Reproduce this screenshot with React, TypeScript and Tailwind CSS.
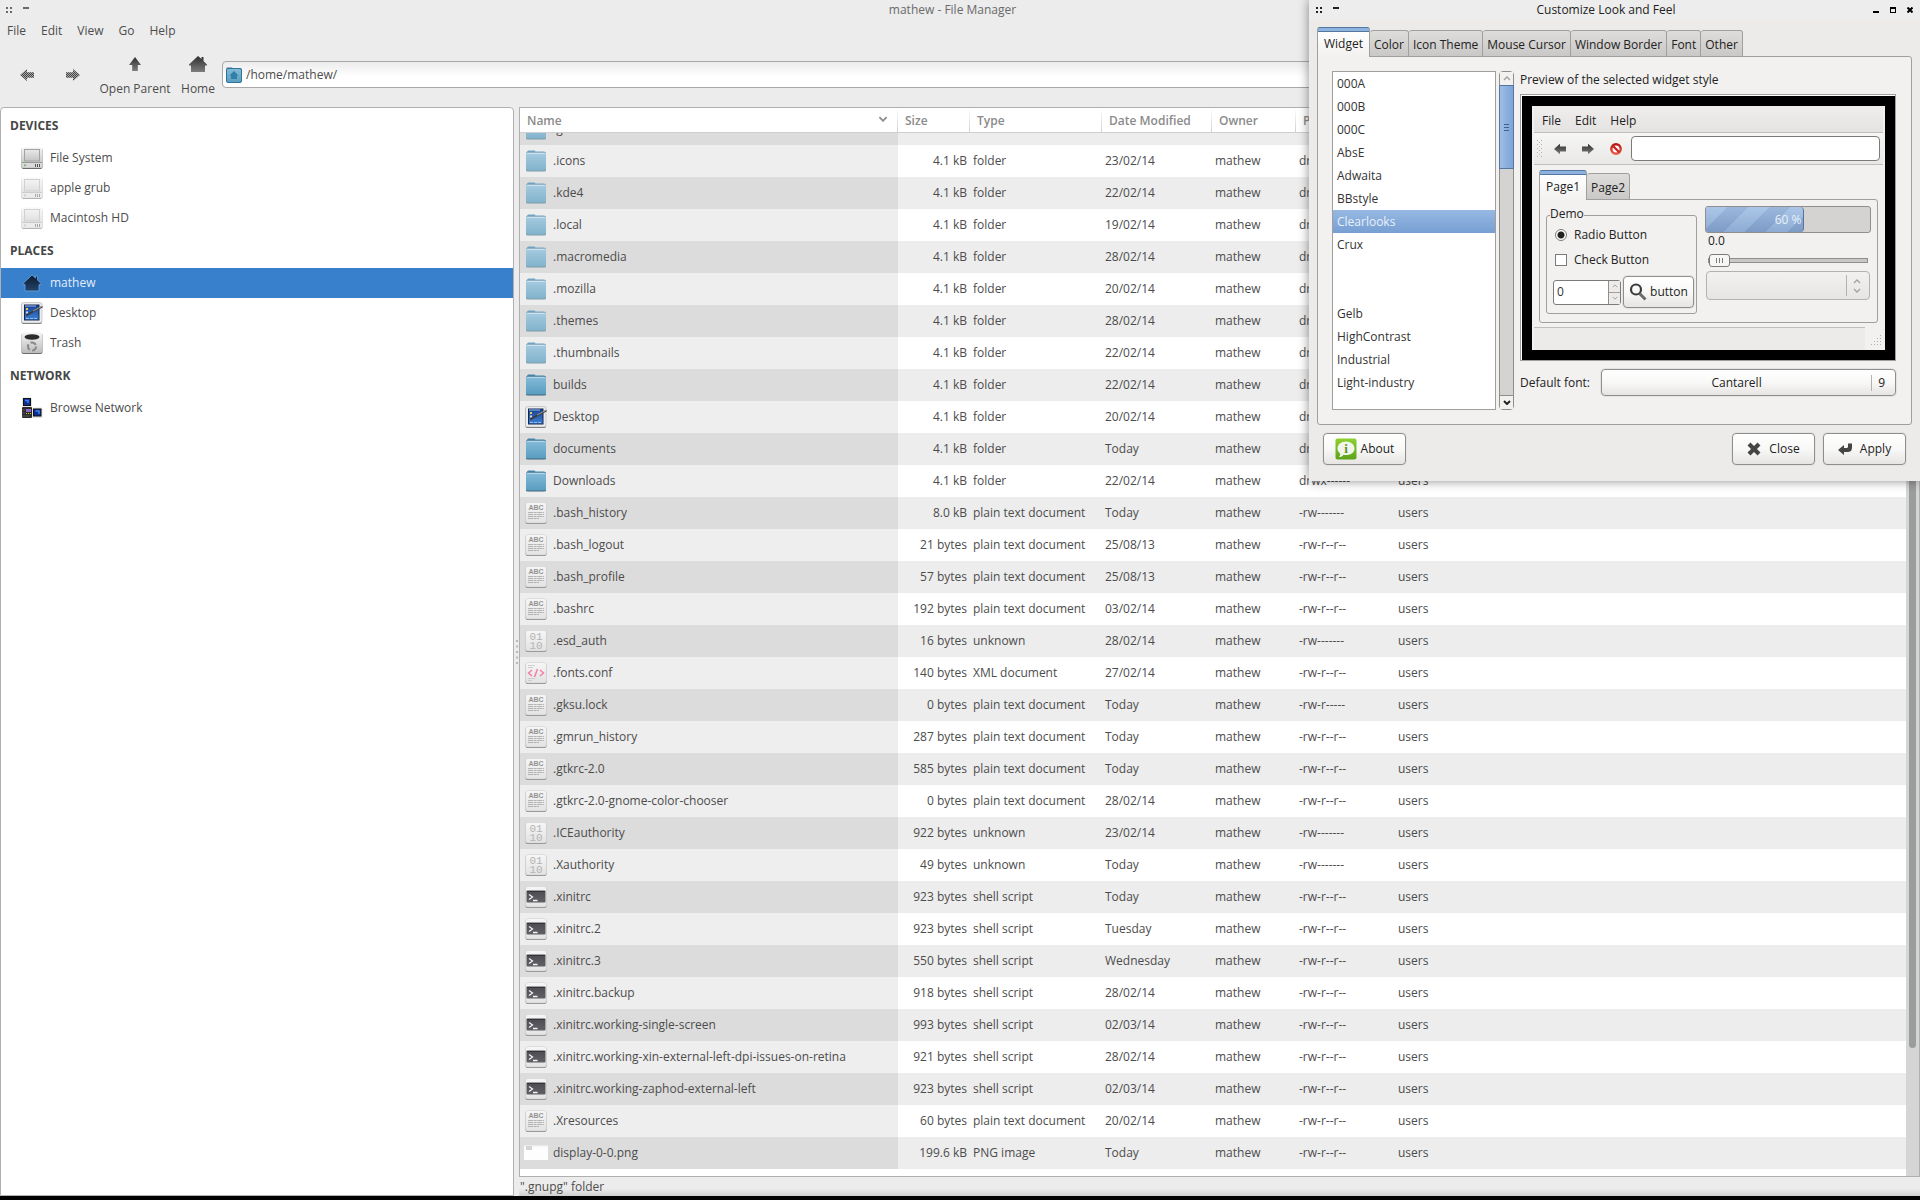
import { useState } from "react";
import type { ReactNode } from "react";
import clsx from "clsx";

type Kind = "hidden" | "folder" | "desktop" | "text" | "binary" | "xml" | "shell" | "image";

interface FileRow {
    name: string;
    size: string;
    type: string;
    date: string;
    perms: string;
    kind: Kind;
}

const file = (kind: Kind, name: string, size: string, type: string, date: string, perms = "-rw-r--r--"): FileRow => ({
    kind,
    name,
    size,
    type,
    date,
    perms,
});

const DIR = "drwx------";
const PRIVATE = "-rw-------";
const TEXT = "plain text document";

const files: FileRow[] = [
    file("hidden", ".icons", "4.1 kB", "folder", "23/02/14", DIR),
    file("hidden", ".kde4", "4.1 kB", "folder", "22/02/14", DIR),
    file("hidden", ".local", "4.1 kB", "folder", "19/02/14", DIR),
    file("hidden", ".macromedia", "4.1 kB", "folder", "28/02/14", DIR),
    file("hidden", ".mozilla", "4.1 kB", "folder", "20/02/14", DIR),
    file("hidden", ".themes", "4.1 kB", "folder", "28/02/14", DIR),
    file("hidden", ".thumbnails", "4.1 kB", "folder", "22/02/14", DIR),
    file("folder", "builds", "4.1 kB", "folder", "22/02/14", DIR),
    file("desktop", "Desktop", "4.1 kB", "folder", "20/02/14", DIR),
    file("folder", "documents", "4.1 kB", "folder", "Today", DIR),
    file("folder", "Downloads", "4.1 kB", "folder", "22/02/14", DIR),
    file("text", ".bash_history", "8.0 kB", TEXT, "Today", PRIVATE),
    file("text", ".bash_logout", "21 bytes", TEXT, "25/08/13"),
    file("text", ".bash_profile", "57 bytes", TEXT, "25/08/13"),
    file("text", ".bashrc", "192 bytes", TEXT, "03/02/14"),
    file("binary", ".esd_auth", "16 bytes", "unknown", "28/02/14", PRIVATE),
    file("xml", ".fonts.conf", "140 bytes", "XML document", "27/02/14"),
    file("text", ".gksu.lock", "0 bytes", TEXT, "Today", "-rw-r-----"),
    file("text", ".gmrun_history", "287 bytes", TEXT, "Today"),
    file("text", ".gtkrc-2.0", "585 bytes", TEXT, "Today"),
    file("text", ".gtkrc-2.0-gnome-color-chooser", "0 bytes", TEXT, "28/02/14"),
    file("binary", ".ICEauthority", "922 bytes", "unknown", "23/02/14", PRIVATE),
    file("binary", ".Xauthority", "49 bytes", "unknown", "Today", PRIVATE),
    file("shell", ".xinitrc", "923 bytes", "shell script", "Today"),
    file("shell", ".xinitrc.2", "923 bytes", "shell script", "Tuesday"),
    file("shell", ".xinitrc.3", "550 bytes", "shell script", "Wednesday"),
    file("shell", ".xinitrc.backup", "918 bytes", "shell script", "28/02/14"),
    file("shell", ".xinitrc.working-single-screen", "993 bytes", "shell script", "02/03/14"),
    file("shell", ".xinitrc.working-xin-external-left-dpi-issues-on-retina", "921 bytes", "shell script", "28/02/14"),
    file("shell", ".xinitrc.working-zaphod-external-left", "923 bytes", "shell script", "02/03/14"),
    file("text", ".Xresources", "60 bytes", TEXT, "20/02/14"),
    file("image", "display-0-0.png", "199.6 kB", "PNG image", "Today"),
];

const widgetStyles = [
    "000A",
    "000B",
    "000C",
    "AbsE",
    "Adwaita",
    "BBstyle",
    "Clearlooks",
    "Crux",
    "",
    "",
    "Gelb",
    "HighContrast",
    "Industrial",
    "Light-industry",
];

const dialogTabs = ["Widget", "Color", "Icon Theme", "Mouse Cursor", "Window Border", "Font", "Other"];

/* ---------- icons ---------- */

// Gradients shared by all the icons
function Gradients() {
    const defs: [string, string, string][] = [
        ["gDark", "#2e2e2e", "#7d7d7d"],
        ["gBlue", "#85bbd9", "#5a9dc0"],
        ["gPale", "#a5cbe1", "#82b3cc"],
        ["gPaper", "#f6f6f6", "#e2e2e2"],
        ["gDrive", "#f4f4f4", "#bdbdbd"],
        ["gScreen", "#e9e9e9", "#c4c4c4"],
        ["gDesk", "#16408f", "#3f82d6"],
        ["gNavy", "#0b1b2e", "#24456c"],
        ["gTerm", "#4b4b50", "#606066"],
        ["gGreen", "#8ed12f", "#5da31b"],
        ["gRed", "#b31616", "#ef5a4a"],
    ];
    return (
        <svg className="absolute h-0 w-0" aria-hidden="true">
            <defs>
                {defs.map(([id, from, to]) => (
                    <linearGradient key={id} id={id} x1="0" y1="0" x2="0" y2="1">
                        <stop offset="0" stopColor={from} />
                        <stop offset="1" stopColor={to} />
                    </linearGradient>
                ))}
                <pattern id="pDither" width="2" height="2" patternUnits="userSpaceOnUse">
                    <rect width="2" height="2" fill="#a6a6a6" />
                    <rect width="1" height="1" fill="#454545" />
                    <rect x="1" y="1" width="1" height="1" fill="#454545" />
                </pattern>
            </defs>
        </svg>
    );
}

function FolderIcon({ pale = false }: { pale?: boolean }) {
    return (
        <svg className="h-[22px] w-[22px]" viewBox="0 0 22 22">
            <path d="M2 2Q2 .5 3.500 .5H9.500L10.500 1.500H19Q20.500 1.500 20.500 3V8H1.500Z" fill={pale ? "#6fa5c2" : "#4386a9"} />
            <rect x="1" y="2" width="20" height="19.500" rx="1.500" fill={pale ? "#7f9aa8" : "#41657a"} />
            <rect x="1" y="2.500" width="20" height="18" rx="1.500" fill={pale ? "url(#gPale)" : "url(#gBlue)"} />
            <path d="M2 3.500H20" stroke="#fff" strokeOpacity=".45" />
        </svg>
    );
}

function DriveIcon({ faded = false }: { faded?: boolean }) {
    return (
        <svg className={clsx("h-[22px] w-[22px]", faded && "opacity-50")} viewBox="0 0 22 22">
            <rect x=".5" y="1" width="21" height="21" rx="2" fill="#6b6b6b" />
            <rect x=".5" y=".5" width="21" height="20.500" rx="2" fill="url(#gDrive)" />
            <rect x="3.500" y="2.500" width="15" height="11.500" fill="url(#gScreen)" stroke="#a2a2a2" />
            <rect x="1" y="16" width="20" height="4.500" fill="#dadada" />
            <path d="M1 15.500H21" stroke="#9b9b9b" />
            <circle cx="4" cy="18.300" r="1.100" fill="#7fb27a" />
            <path d="M14.500 17V20M16.500 17V20M18.500 17V20" stroke="#555" />
        </svg>
    );
}

function HomeIcon({ fill, edge }: { fill: string; edge?: string }) {
    return (
        <svg className="h-[18px] w-[20px]" viewBox="0 0 20 18">
            <path
                d="M10 1L13.500 4V2H15.500V6L19 9.500V10.500H17V17H3V10.500H1V9.500Z"
                fill={fill}
                stroke={edge ?? "none"}
                strokeWidth=".8"
            />
        </svg>
    );
}

function DesktopIcon() {
    return (
        <svg className="h-[22px] w-[22px]" viewBox="0 0 22 22">
            <rect x=".5" y="1" width="20.500" height="21" rx="2" fill="#6b6b6b" />
            <rect x=".5" y=".5" width="20.500" height="20.500" rx="2" fill="#ececec" stroke="#b5b5b5" strokeWidth=".6" />
            <rect x="3.500" y="3" width="14.500" height="15" fill="url(#gDesk)" stroke="#12294f" />
            <path d="M4 4H15" stroke="#9cc0f0" />
            <rect x="5" y="6" width="2" height="2" fill="#f4c35c" />
            <rect x="5" y="9.500" width="2" height="2" fill="#d8d8d8" />
            <path d="M5 16.500H17" stroke="#8fb8ef" strokeDasharray="3 1" />
            <path d="M21.500 4.500L12 9.500L5 13.500" stroke="#3a3a3a" strokeWidth="1.800" fill="none" />
            <path d="M21 4.300L12 9" stroke="#b8b8b8" strokeWidth=".8" />
        </svg>
    );
}

function TrashIcon() {
    return (
        <svg className="h-[22px] w-[22px]" viewBox="0 0 22 22">
            <rect x=".5" y="1" width="21" height="21" rx="2" fill="#6b6b6b" />
            <rect x=".5" y=".5" width="21" height="20.500" rx="2" fill="url(#gDrive)" />
            <ellipse cx="11" cy="5" rx="7.500" ry="2.800" fill="#2c2c2c" />
            <circle cx="11" cy="14.500" r="4" fill="none" stroke="#8a8a8a" strokeWidth="2.200" strokeDasharray="6 2.400" />
        </svg>
    );
}

function NetworkIcon() {
    return (
        <svg className="h-[22px] w-[22px]" viewBox="0 0 22 22">
            <rect x="1" y="10" width="10" height="11" rx="1" fill="#2a2a2a" />
            <rect x="5" y="12" width="5" height="3" fill="#8a67c9" />
            <path d="M5 16.500H10" stroke="#d8d800" strokeDasharray="1 1" />
            <path d="M1.500 13H4M1.500 16H4M1.500 19H9" stroke="#8d8d8d" strokeDasharray="1 1" />
            <rect x="1" y=".5" width="10" height="9.500" rx="1.500" fill="#e3e3e3" />
            <rect x="2.500" y="1.500" width="7" height="7" fill="#0c2f8f" stroke="#111" />
            <path d="M4 3.500H7V6" stroke="#3d85f5" strokeWidth="1.500" fill="none" />
            <rect x="11" y="10.500" width="10.500" height="10.500" rx="1.500" fill="#e3e3e3" />
            <rect x="12.500" y="12" width="7.500" height="7" fill="#0c2f8f" stroke="#111" />
            <path d="M14.500 14H18V17" stroke="#3d85f5" strokeWidth="1.500" fill="none" />
        </svg>
    );
}

function Paper({ children }: { children: ReactNode }) {
    return (
        <svg className="h-[22px] w-[22px]" viewBox="0 0 22 22">
            <rect x=".5" y="1" width="21" height="21" rx="2.500" fill="#858585" />
            <rect x=".5" y=".5" width="21" height="20.500" rx="2.500" fill="url(#gPaper)" stroke="#d2d2d2" strokeWidth=".6" />
            {children}
        </svg>
    );
}

function FileIcon({ kind }: { kind: Kind }) {
    switch (kind) {
        case "hidden":
            return <FolderIcon pale />;
        case "folder":
            return <FolderIcon />;
        case "desktop":
            return <DesktopIcon />;
        case "binary":
            return (
                <Paper>
                    <text x="11" y="10" textAnchor="middle" fontSize="11" fontFamily="Liberation Mono" fill="#b4b4b4">
                        01
                    </text>
                    <text x="11" y="19" textAnchor="middle" fontSize="11" fontFamily="Liberation Mono" fill="#b4b4b4">
                        10
                    </text>
                </Paper>
            );
        case "xml":
            return (
                <Paper>
                    <path d="M3 3.500H10M3 5.500H8M3 16.500H10M3 18.500H7" stroke="#cfcfcf" />
                    <path d="M7 8L3.500 11L7 14M15 8L18.500 11L15 14M12.500 7L9.500 15" stroke="#f27fa5" strokeWidth="1.500" fill="none" />
                </Paper>
            );
        case "shell":
            return (
                <Paper>
                    <rect x="1.500" y="4.500" width="19" height="12" rx="1" fill="url(#gTerm)" />
                    <path d="M2 5.500H20" stroke="#35353a" />
                    <path d="M4 8.500L7.500 11L4 13.500M8 14.500H12.500" stroke="#f4f4f4" strokeWidth="1.300" fill="none" />
                </Paper>
            );
        case "image":
            return (
                <svg className="h-[22px] w-6 shrink-0" viewBox="0 0 24 22">
                    <rect y="3" width="24" height="15" fill="#fdfdfd" />
                    <rect y="3" width="24" height="1.500" fill="#ececec" />
                    <rect x="2" y="4" width="6" height="4" fill="#d4d4d4" />
                </svg>
            );
        default:
            return (
                <Paper>
                    <text x="11" y="7.500" textAnchor="middle" fontSize="7" fontWeight="bold" fontFamily="Liberation Sans" fill="#949494">
                        ABC
                    </text>
                    <path d="M3 10.500H19M3 12.500H19M3 14.500H19M3 16.500H14" stroke="#b3b3b3" strokeDasharray="5 .6 3 .6" />
                </Paper>
            );
    }
}

function ArrowIcon({ dir, fill = "url(#gDark)", size = 14 }: { dir: "left" | "right" | "up"; fill?: string; size?: number }) {
    const paths = {
        left: "M0 7L7 1V4.200H14V9.800H7V13Z",
        right: "M14 7L7 1V4.200H0V9.800H7V13Z",
        up: "M7 0L13 8H9.800V14H4.200V8H1Z",
    };
    return (
        <svg width={size} height={size} viewBox="0 0 14 14">
            <path d={paths[dir]} fill={fill} />
        </svg>
    );
}

function ForbiddenIcon() {
    return (
        <svg className="h-3 w-3" viewBox="0 0 12 12">
            <circle cx="6" cy="6" r="4.700" fill="#fff" stroke="url(#gRed)" strokeWidth="2.400" />
            <path d="M2.500 2.500L9.500 9.500" stroke="#c9281f" strokeWidth="2.400" />
        </svg>
    );
}

function SearchIcon() {
    return (
        <svg className="h-[18px] w-[18px]" viewBox="0 0 18 18">
            <circle cx="7" cy="6.500" r="5" fill="none" stroke="#3c3c3c" strokeWidth="2.200" />
            <path d="M10.500 10.500L16.500 16.500" stroke="#6a6a6a" strokeWidth="3" />
        </svg>
    );
}

function InfoIcon() {
    return (
        <svg className="h-[22px] w-[22px]" viewBox="0 0 22 22">
            <rect x=".5" y=".5" width="21" height="21" rx="2" fill="url(#gGreen)" />
            <path d="M11 3.500C16 3.500 19.500 6.500 19.500 10.500S16 17 11 17C10 17 9 16.900 8.500 16.700C7.500 18.300 6 19 4 19C5 18 5.300 17 5.200 15.500C3.500 14.300 2.500 12.500 2.500 10.500C2.500 6.500 6 3.500 11 3.500Z" fill="#f1f5ea" />
            <text x="11" y="15" textAnchor="middle" fontSize="13" fontWeight="bold" fontFamily="Liberation Serif" fill="#5b9322">
                i
            </text>
        </svg>
    );
}

function CrossIcon() {
    return (
        <svg className="h-[14px] w-[14px]" viewBox="0 0 14 14">
            <path d="M2 2L12 12M12 2L2 12" stroke="#454545" strokeWidth="4.200" />
        </svg>
    );
}

function ReturnIcon() {
    return (
        <svg className="h-[14px] w-[14px]" viewBox="0 0 14 14">
            <path d="M0 8L6 3V6H8.500Q10 6 10 4.500V1.500H14V5.500Q14 10 9.500 10H6V13Z" fill="#454545" />
        </svg>
    );
}

function Chevron({ up = false, weight = 1.3, className }: { up?: boolean; weight?: number; className: string }) {
    return (
        <svg viewBox="0 0 8 5" className={clsx(className, "fill-none stroke-current")}>
            <path d={up ? "M1 4L4 1L7 4" : "M1 1L4 4L7 1"} strokeWidth={weight} />
        </svg>
    );
}

function WindowMenu() {
    return (
        <div className="flex gap-[11px]">
            <svg className="h-1.5 w-1.5 fill-current" viewBox="0 0 6 6">
                <path d="M0 0h2v2H0ZM4 0h2v2H4ZM0 4h2v2H0ZM4 4h2v2H4Z" />
            </svg>
            <svg className="h-1.5 w-1.5 fill-current" viewBox="0 0 6 6">
                <path d="M0 0h6v2H0Z" />
            </svg>
        </div>
    );
}

/* ---------- file manager ---------- */

function SideHeading({ children }: { children: ReactNode }) {
    return <h2 className="flex h-[35px] items-center px-[9px] pt-px font-bold text-[#464646]">{children}</h2>;
}

function SideItem({ icon, label, active }: { icon: ReactNode; label: string; active?: boolean }) {
    return (
        <a href="#" className={clsx("flex h-[30px] items-center gap-[7px] pl-5", active && "bg-[#3880cc] text-[#e3edf8]")}>
            <span className="flex w-[22px] justify-center">{icon}</span>
            {label}
        </a>
    );
}

function Sidebar() {
    return (
        <nav className="w-[514px] shrink-0 rounded-t-sm border border-[#b0b0b0] bg-white">
            <SideHeading>DEVICES</SideHeading>
            <SideItem icon={<DriveIcon />} label="File System" />
            <SideItem icon={<DriveIcon faded />} label="apple grub" />
            <SideItem icon={<DriveIcon faded />} label="Macintosh HD" />
            <SideHeading>PLACES</SideHeading>
            <SideItem icon={<HomeIcon fill="url(#gNavy)" edge="#6ba5e0" />} label="mathew" active />
            <SideItem icon={<DesktopIcon />} label="Desktop" />
            <SideItem icon={<TrashIcon />} label="Trash" />
            <SideHeading>NETWORK</SideHeading>
            <SideItem icon={<NetworkIcon />} label="Browse Network" />
        </nav>
    );
}

const columns = ["Name", "Size", "Type", "Date Modified", "Owner", "Permissions", "Group"];

function FileTable() {
    return (
        <table className="w-full table-fixed border-collapse">
            <colgroup>
                <col className="w-[378px]" />
                <col className="w-[72px]" />
                <col className="w-[132px]" />
                <col className="w-[110px]" />
                <col className="w-[84px]" />
                <col className="w-[99px]" />
                <col />
            </colgroup>
            <thead>
                <tr className="text-left text-[#8b8b8b]">
                    {columns.map((column) => (
                        <th key={column} className="p-0 font-semibold">
                            <div className="flex h-[25px] border-b border-[#cfcfcf] bg-linear-to-b from-white to-[#cfcfcf] pr-px">
                                <button className="flex w-full items-center justify-between bg-white px-[7px] pt-0.5">
                                    {column}
                                    {column === "Name" && <Chevron weight={1.5} className="mr-0.5 mb-1 h-1.5 w-2.5" />}
                                </button>
                            </div>
                        </th>
                    ))}
                </tr>
            </thead>
            <tbody>
                {/* row scrolled partly under the header */}
                <tr className="h-3 bg-[#ededed]">
                    <td className="bg-[#dcdcdc] p-0">
                        <div className="flex h-3 items-end overflow-hidden pl-[5px]">
                            <div className="flex h-8 shrink-0 items-center gap-[6px]">
                                <FileIcon kind="hidden" />
                                .gconf
                            </div>
                        </div>
                    </td>
                    <td colSpan={6} className="p-0" />
                </tr>
                {files.map((f) => (
                    <tr key={f.name} className="group h-8 whitespace-nowrap odd:bg-[#ededed] even:bg-white">
                        <td className="p-0 pl-[5px] group-odd:bg-[#dcdcdc] group-even:bg-[#eeeeee]">
                            <div className="flex items-center gap-[6px]">
                                <span className="flex w-[22px] justify-center">
                                    <FileIcon kind={f.kind} />
                                </span>
                                {f.name}
                            </div>
                        </td>
                        <td className="p-0 pr-[3px] text-right">{f.size}</td>
                        <td className="p-0 pl-[3px]">{f.type}</td>
                        <td className="p-0 pl-[3px]">{f.date}</td>
                        <td className="p-0 pl-[3px]">mathew</td>
                        <td className="p-0 pl-[3px]">{f.perms}</td>
                        <td className="p-0 pl-[3px]">users</td>
                    </tr>
                ))}
            </tbody>
        </table>
    );
}

function FileManager() {
    const [path, setPath] = useState("/home/mathew/");

    return (
        <main className="flex h-screen flex-col border-b-4 border-black bg-[#ececec] text-[#4c4c4c]">
            <header className="flex h-5 items-center pr-11 pl-1.5 text-[#6a6a6a]">
                <WindowMenu />
                <h1 className="flex-1 text-center">mathew - File Manager</h1>
            </header>

            <div className="flex h-[22px] items-center gap-[15px] pl-[7px]">
                {["File", "Edit", "View", "Go", "Help"].map((item) => (
                    <button key={item}>{item}</button>
                ))}
            </div>

            <div className="flex h-[65px] items-center pr-2">
                <button className="ml-5 flex w-[14px]" aria-label="Back">
                    <ArrowIcon dir="left" fill="url(#pDither)" />
                </button>
                <button className="ml-8 flex w-[14px]" aria-label="Forward">
                    <ArrowIcon dir="right" fill="url(#pDither)" />
                </button>
                <button className="ml-[22px] flex w-[66px] flex-col items-center gap-2.5 pt-1 whitespace-nowrap">
                    <ArrowIcon dir="up" />
                    Open Parent
                </button>
                <button className="ml-3 flex w-9 flex-col items-center gap-2 pt-0.5">
                    <HomeIcon fill="url(#gDark)" />
                    Home
                </button>
                <label className="ml-1.5 flex h-[27px] flex-1 items-center gap-1 rounded-sm border border-[#a8a8a8] bg-linear-to-b from-[#ececec] to-white to-60% pl-[3px]">
                    <svg className="h-4 w-4" viewBox="0 0 16 16" aria-hidden="true">
                        <path d="M1 .5H6L7 1.500H15.500V8H.5V.5Z" fill="#3b7f9f" />
                        <rect x=".5" y="1.500" width="15" height="14" rx="1.500" fill="url(#gBlue)" stroke="#2f7396" />
                        <path d="M8 4L12.500 8.500H11V12H5V8.500H3.500Z" fill="#2f7fa6" />
                    </svg>
                    <input
                        className="flex-1 bg-transparent outline-none"
                        aria-label="Location"
                        value={path}
                        onChange={(e) => setPath(e.target.value)}
                    />
                </label>
            </div>

            <div className="flex min-h-0 flex-1">
                <Sidebar />
                <div className="flex w-[5px] items-center justify-center">
                    <svg className="h-6 w-0.5 fill-[#b8b8b8]" viewBox="0 0 2 24">
                        <path d="M0 0h2v2H0ZM0 5.500h2v2H0ZM0 11h2v2H0ZM0 16.500h2v2H0ZM0 22h2v2H0Z" />
                    </svg>
                </div>
                <div className="flex min-w-0 flex-1 flex-col">
                    <div className="flex min-h-0 flex-1 border border-[#b0b0b0] bg-white">
                        <div className="min-w-0 flex-1 overflow-hidden">
                            <FileTable />
                        </div>
                        <div className="w-[13px] bg-[#d5d5d5] px-[3px]">
                            <div className="h-[88%] w-[7px] rounded-full bg-[#9b9c9d]" />
                        </div>
                    </div>
                    <footer className="flex h-[19px] items-center bg-linear-to-b from-[#ececec] from-60% to-[#cfcfcf] pl-px">
                        &quot;.gnupg&quot; folder
                    </footer>
                </div>
            </div>
        </main>
    );
}

/* ---------- look and feel dialog ---------- */

function Tabs({ labels, active }: { labels: string[]; active: string }) {
    return (
        <div role="tablist" className="relative -mb-px flex h-[30px] items-end">
            {labels.map((label, i) => {
                const selected = label === active;
                return (
                    <button
                        key={label}
                        role="tab"
                        aria-selected={selected}
                        className={clsx(
                            "rounded-t-[3px] border border-[#a09f9d] pt-0.5 whitespace-nowrap",
                            selected
                                ? "h-[30px] border-t-[#54769f] border-b-0 bg-[linear-gradient(#8fb3e0_0_3px,#54769f_3px_4px,#ffffff_4px,#f2f1f0_100%)] px-1.5"
                                : "h-[27px] bg-linear-to-b from-[#dedddb] to-[#cac8c6] px-1",
                            !selected && i > 0 && "border-l-0"
                        )}
                    >
                        {label}
                    </button>
                );
            })}
        </div>
    );
}

const raised = "rounded border border-[#8f8e8c] bg-linear-to-b from-white via-[#f8f8f7] to-[#e6e5e3] shadow-[0_0_0_1px_#e4e3e2]";

function StyleList() {
    const [selected, setSelected] = useState("Clearlooks");

    return (
        <div className="flex h-[339px] gap-[3px]">
            <ul role="listbox" aria-label="Widget style" className="w-[164px] border border-[#a09f9d] bg-white text-[#333]">
                {widgetStyles.map((name, i) => (
                    <li
                        key={i}
                        role="option"
                        aria-selected={name === selected}
                        onClick={() => name && setSelected(name)}
                        className={clsx(
                            "flex h-[23px] items-center px-1",
                            name === selected && "bg-linear-to-b from-[#97b8e2] to-[#779fd3] text-[#e8f0fa]"
                        )}
                    >
                        {name}
                    </li>
                ))}
            </ul>
            <div className="flex w-[15px] flex-col rounded-sm border border-[#8f8e8c] bg-[#d4d3d1]">
                <button aria-label="Scroll up" className="flex h-[13px] items-center justify-center bg-[#f2f1f0] text-[#a0a0a0]">
                    <Chevron up className="h-[5px] w-2" />
                </button>
                <div className="-mx-px flex h-[84px] items-center justify-center border border-[#54769f] bg-linear-to-r from-[#9dbde6] to-[#7da3d6]">
                    <svg className="h-[7px] w-[5px] stroke-[#3e628f]" viewBox="0 0 5 7">
                        <path d="M0 .5H5M0 3.500H5M0 6.500H5" />
                    </svg>
                </div>
                <button aria-label="Scroll down" className="mt-auto flex h-[14px] items-center justify-center border-t border-[#8f8e8c] bg-[#f2f1f0] text-[#222]">
                    <Chevron weight={2} className="h-[5px] w-2" />
                </button>
            </div>
        </div>
    );
}

function PreviewControls() {
    return (
        <div className="flex h-[124px] gap-2 rounded-[3px] rounded-tl-none border border-[#a09f9d] px-1.5 pt-1.5 pb-2">
            <fieldset className="flex w-[151px] min-w-0 shrink-0 flex-col rounded-[3px] border border-[#a09f9d] pr-px pb-[5px] pl-1.5">
                <legend className="ml-[-3px] h-[18px]">Demo</legend>
                <label className="flex h-[22px] items-center gap-[7px]">
                    <input
                        type="radio"
                        defaultChecked
                        className="ml-0.5 h-3 w-3 appearance-none rounded-full border border-[#7c7b79] bg-white checked:bg-[radial-gradient(circle,#222_0_3px,#fff_4px)]"
                    />
                    Radio Button
                </label>
                <label className="flex h-[28px] items-center gap-[7px]">
                    <input type="checkbox" className="ml-0.5 h-3 w-3 appearance-none border border-[#7c7b79] bg-white checked:bg-[#444]" />
                    Check Button
                </label>
                <div className="mt-auto flex items-center gap-0.5">
                    <div className="flex h-[25px] w-[68px] rounded-[3px] border border-[#7c7b79] bg-white">
                        <input aria-label="Spin" defaultValue="0" className="w-0 flex-1 bg-transparent pl-[3px] text-[#333] outline-none" />
                        <div className="flex w-3 flex-col border-l border-[#8f8e8c] bg-[#ecebea] text-[#a0a0a0]">
                            <button aria-label="Increase" className="flex flex-1 items-center justify-center border-b border-[#a09f9d]">
                                <Chevron up className="h-1 w-1.5" />
                            </button>
                            <button aria-label="Decrease" className="flex flex-1 items-center justify-center">
                                <Chevron className="h-1 w-1.5" />
                            </button>
                        </div>
                    </div>
                    <button className={clsx("flex h-8 w-[71px] items-center justify-center gap-[3px]", raised)}>
                        <SearchIcon />
                        button
                    </button>
                </div>
            </fieldset>

            <div className="flex flex-1 flex-col">
                <div
                    role="progressbar"
                    aria-valuenow={60}
                    className="flex h-[27px] shrink-0 overflow-hidden rounded-[3px] border border-[#8f8e8c] bg-[#d4d3d1]"
                >
                    <div
                        className="flex items-center justify-end rounded-r-sm border-r border-[#54769f] bg-[linear-gradient(#ffffff33,#00000011),repeating-linear-gradient(135deg,#97b8e2_0_15px,#84a6d4_15px_30px)] pr-0.5 text-[#e8f0fa]"
                        style={{ width: "60%" }}
                    >
                        60 %
                    </div>
                </div>
                <label className="flex flex-col px-[3px]">
                    <span className="h-[18px]">0.0</span>
                    <input
                        type="range"
                        defaultValue={0}
                        className="mt-0.5 mb-[3px] h-[15px] w-full appearance-none bg-transparent [&::-webkit-slider-runnable-track]:h-[5px] [&::-webkit-slider-runnable-track]:border [&::-webkit-slider-runnable-track]:border-[#8f8e8c] [&::-webkit-slider-runnable-track]:bg-[#c9c8c6] [&::-webkit-slider-thumb]:-mt-[5px] [&::-webkit-slider-thumb]:h-[13px] [&::-webkit-slider-thumb]:w-[21px] [&::-webkit-slider-thumb]:appearance-none [&::-webkit-slider-thumb]:rounded-[3px] [&::-webkit-slider-thumb]:border [&::-webkit-slider-thumb]:border-[#7c7b79] [&::-webkit-slider-thumb]:bg-[#f6f6f5] [&::-webkit-slider-thumb]:bg-[repeating-linear-gradient(90deg,#7c7b79_0_1px,transparent_1px_3px)] [&::-webkit-slider-thumb]:bg-[length:7px_5px] [&::-webkit-slider-thumb]:bg-center [&::-webkit-slider-thumb]:bg-no-repeat"
                    />
                </label>
                <div className="grid">
                    <select
                        disabled
                        aria-label="Combo"
                        className="col-start-1 row-start-1 mx-px h-[29px] appearance-none rounded border border-[#b3b2b0] bg-linear-to-b from-[#f2f1f0] to-[#e6e5e3]"
                    />
                    <div className="pointer-events-none col-start-1 row-start-1 my-1 mr-2.5 flex flex-col items-center justify-center gap-1 justify-self-end border-l border-[#b3b2b0] pl-1.5 text-[#a0a0a0]">
                        <Chevron up className="h-[5px] w-2" />
                        <Chevron className="h-[5px] w-2" />
                    </div>
                </div>
            </div>
        </div>
    );
}

function Preview() {
    return (
        <div className="border border-[#a09f9d] bg-white pt-px pl-px">
            <div className="border-10 border-black bg-[#f2f1f0]">
                <div className="mx-0.5 flex h-[27px] items-center gap-[14px] border-b border-[#c0bfbd] bg-linear-to-b from-[#efeeed] to-[#e4e3e1] px-2 pt-1">
                    {["File", "Edit", "Help"].map((item) => (
                        <button key={item}>{item}</button>
                    ))}
                </div>
                <div className="mx-0.5 flex h-8 items-center border-b border-[#c0bfbd] bg-linear-to-b from-[#f6f6f5] to-[#e9e8e6] pr-[3px] pl-[3px]">
                    <svg className="h-[17px] w-[5px] fill-[#b3b2b0]" viewBox="0 0 5 17">
                        <path d="M0 0h1v1H0ZM0 4h1v1H0ZM0 8h1v1H0ZM0 12h1v1H0ZM0 16h1v1H0ZM4 0h1v1H4ZM4 4h1v1H4ZM4 8h1v1H4ZM4 12h1v1H4ZM4 16h1v1H4ZM2 2h1v1H2ZM2 6h1v1H2ZM2 10h1v1H2ZM2 14h1v1H2Z" />
                    </svg>
                    <div className="flex gap-4 pr-[9px] pl-3">
                        <button aria-label="Back">
                            <ArrowIcon dir="left" size={12} />
                        </button>
                        <button aria-label="Forward">
                            <ArrowIcon dir="right" size={12} />
                        </button>
                        <button aria-label="Stop">
                            <ForbiddenIcon />
                        </button>
                    </div>
                    <input aria-label="Sample entry" className="h-[25px] flex-1 rounded border border-[#7c7b79] bg-white px-1 outline-none" />
                </div>
                <div className="px-[7px] pt-[5px]">
                    <Tabs labels={["Page1", "Page2"]} active="Page1" />
                    <PreviewControls />
                </div>
                <div className="mt-1 flex h-[23px] items-end pl-0.5">
                    <div className="h-full flex-1 border-t border-[#c0bfbd] bg-[#ecebea]" />
                    <svg className="mr-[3px] mb-1 ml-1.5 h-[11px] w-[11px] fill-[#b0afad]" viewBox="0 0 11 11">
                        <path d="M9 0h1v1H9ZM9 3h1v1H9ZM9 6h1v1H9ZM9 9h1v1H9ZM6 3h1v1H6ZM6 6h1v1H6ZM6 9h1v1H6ZM3 6h1v1H3ZM3 9h1v1H3ZM0 9h1v1H0Z" />
                    </svg>
                </div>
            </div>
        </div>
    );
}

function LookAndFeelDialog() {
    return (
        <section
            role="dialog"
            aria-label="Customize Look and Feel"
            className="absolute top-0 right-0 flex h-[481px] w-[611px] flex-col bg-[#ecebea] text-[#222] shadow-[0_0_10px_rgba(0,0,0,0.45)]"
        >
            <header className="flex h-5 items-center bg-[#ededed] pr-[7px] pl-[7px]">
                <WindowMenu />
                <h2 className="flex-1 text-center">Customize Look and Feel</h2>
                <div className="flex gap-[11px]">
                    <button aria-label="Minimize">
                        <svg className="h-1.5 w-1.5" viewBox="0 0 6 6">
                            <path d="M0 4h6v2H0Z" />
                        </svg>
                    </button>
                    <button aria-label="Maximize">
                        <svg className="h-1.5 w-1.5" viewBox="0 0 6 6">
                            <path d="M0 0h6v6H0ZM1 2v3h4V2Z" fillRule="evenodd" />
                        </svg>
                    </button>
                    <button aria-label="Close window">
                        <svg className="h-1.5 w-1.5" viewBox="0 0 6 6">
                            <path d="M.5 .5L5.500 5.500M5.500 .5L.5 5.500" stroke="#000" strokeWidth="2" />
                        </svg>
                    </button>
                </div>
            </header>

            <div className="px-2 pt-[7px]">
                <Tabs labels={dialogTabs} active="Widget" />
                <div className="flex h-[369px] gap-1.5 rounded-[3px] rounded-tl-none border border-[#a09f9d] bg-[#f2f1f0] pt-[14px] pr-[15px] pl-[14px]">
                    <StyleList />
                    <div className="flex flex-1 flex-col">
                        <p className="h-[23px] pt-px">Preview of the selected widget style</p>
                        <Preview />
                        <div className="mt-2 flex items-center justify-between">
                            <span id="font-label">Default font:</span>
                            <button aria-labelledby="font-label" className={clsx("flex h-[27px] w-[295px] items-center", raised)}>
                                <span className="flex-1 text-center">Cantarell</span>
                                <span className="border-l border-[#b3b2b0] px-1.5 pr-2.5">9</span>
                            </button>
                        </div>
                    </div>
                </div>
            </div>

            <footer className="flex gap-2 px-[14px] pt-2">
                <button className={clsx("mr-auto flex h-8 w-[83px] items-center justify-center gap-1", raised)}>
                    <InfoIcon />
                    About
                </button>
                <button className={clsx("flex h-8 w-[83px] items-center justify-center gap-2", raised)}>
                    <CrossIcon />
                    Close
                </button>
                <button className={clsx("flex h-8 w-[83px] items-center justify-center gap-2", raised)}>
                    <ReturnIcon />
                    Apply
                </button>
            </footer>
        </section>
    );
}

export default function App() {
    return (
        <div className="relative overflow-hidden font-['Open_Sans',sans-serif] text-[12px] leading-4">
            <Gradients />
            <FileManager />
            <LookAndFeelDialog />
        </div>
    );
}
